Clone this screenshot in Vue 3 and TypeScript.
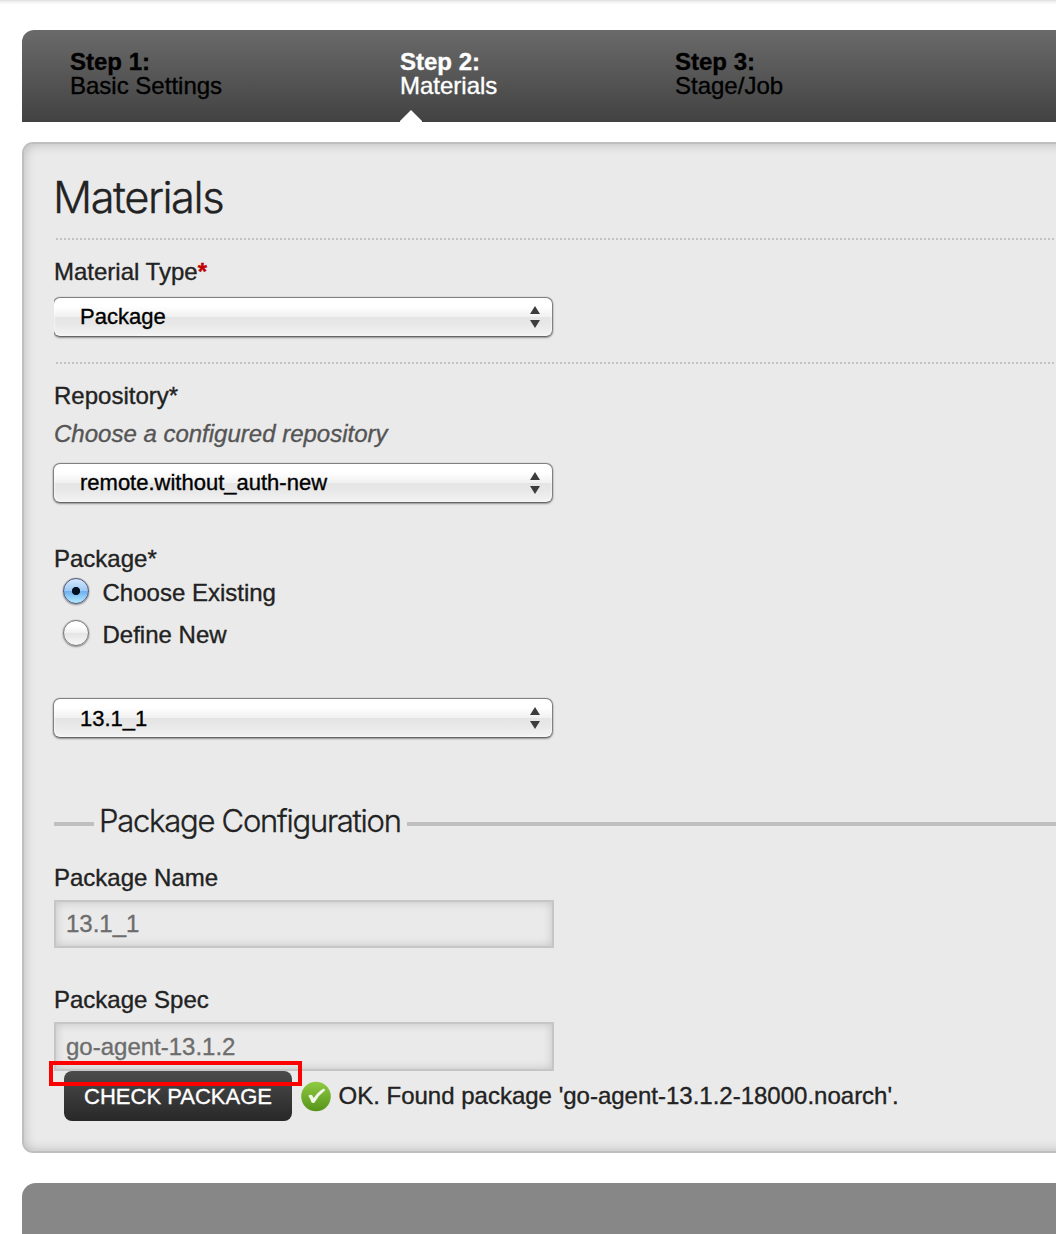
<script setup lang="ts">
interface Step {
  title: string
  name: string
  width: number
  active: boolean
}

const steps: Step[] = [
  { title: 'Step 1:', name: 'Basic Settings', width: 330, active: false },
  { title: 'Step 2:', name: 'Materials', width: 275, active: true },
  { title: 'Step 3:', name: 'Stage/Job', width: 275, active: false },
]
const choices = [
  { label: 'Choose Existing', checked: true },
  { label: 'Define New', checked: false },
]
</script>

<template>
  <div class="page">
    <nav class="steps">
      <div
        v-for="s in steps"
        :key="s.title"
        class="step"
        :class="{ active: s.active }"
        :style="{ width: s.width + 'px' }"
      >
        <strong>{{ s.title }}</strong>
        <span>{{ s.name }}</span>
        <svg v-if="s.active" class="pointer" width="22" height="12" viewBox="0 0 22 12">
          <path d="M0 12V11L11 0L22 11V12Z" fill="#fff" />
        </svg>
      </div>
    </nav>

    <main class="panel">
      <h1>Materials</h1>
      <div class="dots"></div>

      <label class="label type-label">Material Type<b class="req">*</b></label>
      <div class="select clipped">
        <span>Package</span>
        <svg width="10" height="22" viewBox="0 0 10 22"><path d="M5 0L10 8H0Z M0 14H10L5 22Z" fill="#3c3c3c" /></svg>
      </div>
      <div class="dots second"></div>

      <label class="label repo-label">Repository*</label>
      <p class="hint">Choose a configured repository</p>
      <div class="select repo">
        <span>remote.without_auth-new</span>
        <svg width="10" height="22" viewBox="0 0 10 22"><path d="M5 0L10 8H0Z M0 14H10L5 22Z" fill="#3c3c3c" /></svg>
      </div>

      <label class="label package-label">Package*</label>
      <div v-for="c in choices" :key="c.label" class="choice">
        <i class="radio" :class="{ checked: c.checked }"></i>
        <span>{{ c.label }}</span>
      </div>
      <div class="select existing">
        <span>13.1_1</span>
        <svg width="10" height="22" viewBox="0 0 10 22"><path d="M5 0L10 8H0Z M0 14H10L5 22Z" fill="#3c3c3c" /></svg>
      </div>

      <div class="legend"><i class="lead"></i><h2>Package Configuration</h2><i class="rest"></i></div>

      <label class="label name-label">Package Name</label>
      <div class="input name-input">13.1_1</div>
      <label class="label spec-label">Package Spec</label>
      <div class="input spec-input">go-agent-13.1.2</div>

      <div class="check-row">
        <div class="button">CHECK PACKAGE</div>
        <div class="highlight"></div>
        <svg class="ok" width="30" height="31" viewBox="0 0 30 31">
          <defs>
            <linearGradient id="okFill" x1="0" y1="0" x2="0" y2="1">
              <stop offset="0" stop-color="#90cb43" />
              <stop offset="1" stop-color="#569319" />
            </linearGradient>
          </defs>
          <circle cx="15" cy="15.5" r="14.8" fill="url(#okFill)" />
          <path d="M7.3 14.8Q9 13 11 14L12.6 17Q17 10.6 22.6 7.4L24.4 9Q17.8 14 13.6 21.4Q12 22.6 10.4 21.2Q9.4 17.6 7.3 14.8Z" fill="#f1f6e9" />
        </svg>
        <span class="message">OK. Found package 'go-agent-13.1.2-18000.noarch'.</span>
      </div>
    </main>

    <footer class="footer"></footer>
  </div>
</template>

<style>
body {
  background: #fff;
}
</style>

<style scoped>
* {
  box-sizing: border-box;
}
.page {
  width: 1056px;
  height: 1234px;
  overflow: hidden;
  padding: 30px 0 0 22px;
  background: linear-gradient(#dedede, #f3f3f3 2px, #fff 5px);
  font: 24px/28px "Liberation Sans", Arial, sans-serif;
  color: #222;
  -webkit-text-stroke: 0.35px currentColor;
}
.steps {
  display: flex;
  height: 92px;
  padding: 20px 0 0 48px;
  border-radius: 12px 0 0 0;
  background: linear-gradient(#6a6a6a, #424242);
  color: #000;
  line-height: 24px;
}
.step {
  position: relative;
  flex: none;
}
.step strong,
.step span {
  display: block;
}
.step.active {
  color: #fff;
}
.pointer {
  position: absolute;
  left: 0;
  bottom: 0;
}
.panel {
  width: 1054px;
  height: 1011px;
  margin-top: 20px;
  padding: 24px 0 0 30px;
  border: 2px solid #bfbfbf;
  border-radius: 11px;
  background: #eaeaea;
  box-shadow: inset 0 0 12px rgba(0, 0, 0, 0.22);
}
h1 {
  margin: 0 0 0 -1px;
  height: 70px;
  font: 300 43.5px/58px Inter, "Liberation Sans", sans-serif;
  letter-spacing: -1.5px;
}
.dots {
  height: 2px;
  margin-left: 2px;
  background: repeating-linear-gradient(90deg, #c2c2c2 0 2px, transparent 2px 4px);
}
.label {
  display: block;
  height: 28px;
}
.type-label {
  margin-top: 18px;
}
.req {
  color: #c00000;
}
.select {
  display: flex;
  justify-content: space-between;
  align-items: center;
  width: 500px;
  height: 40px;
  margin-left: -1px;
  padding: 0 12px 0 26px;
  border: 1px solid #808080;
  border-bottom-color: #666;
  border-radius: 7px;
  background: linear-gradient(#fff 0, #fff 22%, #f1f1f1 49%, #e5e5e5 51%, #e8e8e8 70%, #f3f3f3 100%);
  box-shadow: 0 0 1px rgba(0, 0, 0, 0.4), 0 1px 2px rgba(0, 0, 0, 0.35), inset 0 0 3px #fff;
  color: #000;
  font-size: 22px;
}
.select.clipped {
  margin-top: 11px;
  clip-path: inset(-4px -4px -4px 1px);
}
.dots.second {
  margin-top: 25px;
}
.repo-label {
  margin-top: 18px;
}
.hint {
  margin: 10px 0 0;
  color: #555;
  font-style: italic;
}
.repo {
  margin-top: 15px;
}
.package-label {
  margin-top: 42px;
}
.choice {
  display: flex;
  height: 42px;
  padding: 4px 0 0 9px;
}
.choice span {
  margin: 2px 0 0 13.5px;
}
.radio {
  width: 26px;
  height: 26px;
  margin-top: 1px;
  border: 1.5px solid #777;
  border-radius: 50%;
  background: linear-gradient(#fff 0 20%, #f0f0f0 49%, #e4e4e4 51%, #f8f8f8);
  box-shadow: 0 0 1px rgba(0, 0, 0, 0.5), 0 1px 2px rgba(0, 0, 0, 0.35);
}
.radio.checked {
  border-color: #50567a;
  background:
    radial-gradient(circle, #04101f 0 3.7px, transparent 4.5px),
    linear-gradient(#d6e8fb, #9cc9f5 48%, #6fb1f0 52%, #b5ebff);
}
.existing {
  margin-top: 41px;
}
.existing span {
  padding-top: 1px;
}
.legend {
  display: flex;
  height: 40px;
  margin-top: 64px;
  align-items: flex-start;
}
.legend i {
  height: 4px;
  margin-top: 20px;
  background: #c0c0c0;
}
.lead {
  width: 40px;
}
.rest {
  flex: 1;
}
.legend h2 {
  width: 313px;
  margin: 0;
  padding-left: 5px;
  font: 300 31px/38px Inter, "Liberation Sans", sans-serif;
  letter-spacing: -1.25px;
  white-space: nowrap;
}
.name-label {
  margin-top: 22px;
}
.input {
  width: 500px;
  height: 48px;
  padding: 8px 0 0 10px;
  border: 2px solid #c6c6c6;
  box-shadow: inset 0 0 10px rgba(0, 0, 0, 0.17);
  color: #6d6d6d;
}
.name-input {
  margin-top: 8px;
}
.spec-label {
  margin-top: 38px;
}
.spec-input {
  height: 49px;
  margin-top: 8px;
  padding-top: 9px;
}
.check-row {
  position: relative;
  display: flex;
  height: 50px;
  padding-left: 10px;
}
.button {
  width: 228px;
  height: 50px;
  border-radius: 8px;
  background: linear-gradient(#4b4b4b, #282828);
  color: #fff;
  font-size: 22px;
  line-height: 52px;
  text-align: center;
}
.highlight {
  position: absolute;
  left: -5px;
  top: -10px;
  width: 253px;
  height: 25px;
  border: 4px solid #f00;
}
.ok {
  margin: 10px 0 0 9px;
}
.message {
  margin: 11px 0 0 7.5px;
  white-space: nowrap;
}
.footer {
  height: 51px;
  margin-top: 30px;
  border-radius: 14px 0 0 0;
  background: #878787;
}
</style>
